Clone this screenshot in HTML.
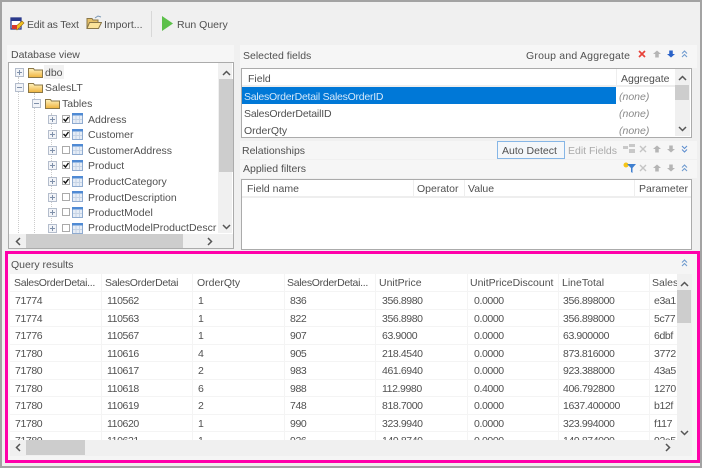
<!DOCTYPE html>
<html><head><meta charset="utf-8">
<style>
html,body{margin:0;padding:0}
body{width:702px;height:468px;overflow:hidden;position:relative;background:#f0f0f0;font-family:"Liberation Sans",sans-serif;font-size:10.5px;color:#333;filter:blur(.35px)}
div,span,svg{position:absolute}
span{white-space:nowrap;line-height:14px;height:14px;margin-top:1px}
.b{background:#fff}
.g{color:#505050}
#q span{letter-spacing:-.4px}
#q span.h{letter-spacing:0}
#q span.s{letter-spacing:-.3px}
</style></head><body>
<svg width="0" height="0" style="left:0;top:0">
<defs>
<linearGradient id="fg" x1="0" y1="0" x2="0" y2="1"><stop offset="0" stop-color="#fff3c0"/><stop offset="1" stop-color="#eeb33c"/></linearGradient>
<symbol id="folder" viewBox="0 0 15 11"><path d="M.5 10.500V1.500h5l1 1.500h8v7.500z" fill="url(#fg)" stroke="#8a7748"/></symbol>
<symbol id="plus" viewBox="0 0 9 9"><rect x=".5" y=".5" width="8" height="8" fill="#f2f4f8" stroke="#b4bdcc"/><path d="M2 4.500h5M4.500 2v5" stroke="#7f90aa"/></symbol>
<symbol id="minus" viewBox="0 0 9 9"><rect x=".5" y=".5" width="8" height="8" fill="#f2f4f8" stroke="#b4bdcc"/><path d="M2 4.500h5" stroke="#7f90aa"/></symbol>
<symbol id="tbl" viewBox="0 0 11 11"><rect x=".5" y=".5" width="10" height="10" fill="#e6edf6" stroke="#8fabd0"/><rect x="0" y="0" width="11" height="2.500" fill="#4f8ad4"/><path d="M4 3v7M7.500 3v7M1 6.500h9" stroke="#c6d4e6"/></symbol>
<symbol id="on" viewBox="0 0 8 8"><rect x=".5" y=".5" width="7" height="7" fill="#fff" stroke="#aaa"/><path d="M1.500 4l2 2 3-4" fill="none" stroke="#111" stroke-width="1.400"/></symbol>
<symbol id="off" viewBox="0 0 8 8"><rect x=".5" y=".5" width="7" height="7" fill="#fff" stroke="#aaa"/></symbol>
<symbol id="ua" viewBox="0 0 9 6"><path d="M1 5l3.500-3.500L8 5" fill="none" stroke="#555" stroke-width="1.500"/></symbol>
<symbol id="da" viewBox="0 0 9 6"><path d="M1 1l3.500 3.500L8 1" fill="none" stroke="#555" stroke-width="1.500"/></symbol>
<symbol id="la" viewBox="0 0 6 9"><path d="M5 1L1.500 4.500 5 8" fill="none" stroke="#555" stroke-width="1.500"/></symbol>
<symbol id="ra" viewBox="0 0 6 9"><path d="M1 1l3.500 3.500L1 8" fill="none" stroke="#555" stroke-width="1.500"/></symbol>
<symbol id="cu" viewBox="0 0 7 8"><path d="M1 3.500l2.500-2.500L6 3.500M1 7l2.500-2.500L6 7" fill="none" stroke="#6f9bcf" stroke-width="1.100"/></symbol>
<symbol id="cd" viewBox="0 0 7 8"><path d="M1 1l2.500 2.500L6 1M1 4.500L3.500 7 6 4.500" fill="none" stroke="#5f8fcf" stroke-width="1.100"/></symbol>
<symbol id="up" viewBox="0 0 9 8"><path d="M4.500 0L9 4H6.500v4h-4V4H0z" fill="#b5b5b5"/></symbol>
<symbol id="dn" viewBox="0 0 9 8"><path d="M4.500 8L9 4H6.500V0h-4v4H0z" fill="#b5b5b5"/></symbol>
<symbol id="dnb" viewBox="0 0 9 8"><path d="M4.500 8L9 4H6.500V0h-4v4H0z" fill="#2a62c8"/></symbol>
<symbol id="x" viewBox="0 0 8 8"><path d="M1 1l6 6M7 1L1 7" stroke="#c4c4c4" stroke-width="1.400"/></symbol>
</defs></svg>

<!-- outer frame -->
<div style="left:0;top:0;width:702px;height:2px;background:#a3a3a3"></div>
<div style="left:0;top:0;width:2px;height:468px;background:#a3a3a3"></div>
<div style="left:700px;top:0;width:2px;height:468px;background:#a3a3a3"></div>
<div style="left:0;top:466px;width:702px;height:2px;background:#a3a3a3"></div>

<!-- toolbar -->
<svg style="left:10px;top:16px" width="15" height="16" viewBox="0 0 15 16"><rect x="1" y="2" width="10" height="11" fill="#fff" stroke="#2b3a8c" stroke-width="1.300"/><path d="M1 2h10v3H1z" fill="#2b3a8c"/><path d="M4 12l8-7 2 2-7 7z" fill="#f0c020" stroke="#9a6a10" stroke-width=".6"/><path d="M2 9h5v4H2z" fill="#d8392c"/></svg>
<span style="left:27px;top:17px;letter-spacing:-.2px" class="g">Edit as Text</span>
<svg style="left:86px;top:15px" width="16" height="15" viewBox="0 0 16 15"><path d="M1 13.500V3.500h5l1 1.500h5v8.500z" fill="#e5c068" stroke="#8a7748"/><path d="M1 13.500l2.500-6h12l-3 6z" fill="#fbe39a" stroke="#8a7748"/><path d="M9 3l3-2 3 1" fill="none" stroke="#7a97b5"/></svg>
<span style="left:104px;top:17px" class="g">Import...</span>
<div style="left:151px;top:11px;width:1px;height:26px;background:#d8d8d8"></div>
<svg style="left:162px;top:16px" width="11" height="15" viewBox="0 0 11 15"><path d="M0 0l11 7.500L0 15z" fill="#5cc04a"/></svg>
<span style="left:177px;top:17px" class="g">Run Query</span>

<!-- database view -->
<div style="left:7px;top:45px;width:227px;height:17px;background:#f6f6f6"></div>
<span style="left:11px;top:47px" class="g">Database view</span>
<div style="left:8px;top:62px;width:224px;height:185px;background:#fff;border:1px solid #ababab;overflow:hidden">
  <div style="left:9px;top:14px;width:0;height:170px;border-left:1px dotted #ccc"></div>
  <div style="left:25px;top:30px;width:0;height:150px;border-left:1px dotted #ccc"></div>
  <div style="left:42px;top:50px;width:0;height:130px;border-left:1px dotted #ccc"></div>
</div>
<svg style="left:15px;top:68px" width="9" height="9"><use href="#plus"/></svg>
<svg style="left:15px;top:83px" width="9" height="9"><use href="#minus"/></svg>
<svg style="left:32px;top:99px" width="9" height="9"><use href="#minus"/></svg>
<svg style="left:28px;top:67px" width="15" height="11"><use href="#folder"/></svg>
<svg style="left:28px;top:82px" width="15" height="11"><use href="#folder"/></svg>
<svg style="left:45px;top:98px" width="15" height="11"><use href="#folder"/></svg>
<div style="left:44px;top:65px;width:20px;height:14px;background:#f2f2f2"></div>
<span style="left:45px;top:65px" class="g">dbo</span>
<span style="left:45px;top:80px" class="g">SalesLT</span>
<span style="left:62px;top:96px" class="g">Tables</span>

<svg style="left:48px;top:115px" width="9" height="9"><use href="#plus"/></svg><svg style="left:62px;top:115px" width="8" height="8"><use href="#on"/></svg><svg style="left:72px;top:113px" width="11" height="11"><use href="#tbl"/></svg><span style="left:88px;top:112px" class="g">Address</span>
<svg style="left:48px;top:130px" width="9" height="9"><use href="#plus"/></svg><svg style="left:62px;top:130px" width="8" height="8"><use href="#on"/></svg><svg style="left:72px;top:129px" width="11" height="11"><use href="#tbl"/></svg><span style="left:88px;top:127px" class="g">Customer</span>
<svg style="left:48px;top:146px" width="9" height="9"><use href="#plus"/></svg><svg style="left:62px;top:146px" width="8" height="8"><use href="#off"/></svg><svg style="left:72px;top:144px" width="11" height="11"><use href="#tbl"/></svg><span style="left:88px;top:143px" class="g">CustomerAddress</span>
<svg style="left:48px;top:161px" width="9" height="9"><use href="#plus"/></svg><svg style="left:62px;top:161px" width="8" height="8"><use href="#on"/></svg><svg style="left:72px;top:160px" width="11" height="11"><use href="#tbl"/></svg><span style="left:88px;top:158px" class="g">Product</span>
<svg style="left:48px;top:177px" width="9" height="9"><use href="#plus"/></svg><svg style="left:62px;top:177px" width="8" height="8"><use href="#on"/></svg><svg style="left:72px;top:176px" width="11" height="11"><use href="#tbl"/></svg><span style="left:88px;top:174px" class="g">ProductCategory</span>
<svg style="left:48px;top:193px" width="9" height="9"><use href="#plus"/></svg><svg style="left:62px;top:193px" width="8" height="8"><use href="#off"/></svg><svg style="left:72px;top:191px" width="11" height="11"><use href="#tbl"/></svg><span style="left:88px;top:190px" class="g">ProductDescription</span>
<svg style="left:48px;top:208px" width="9" height="9"><use href="#plus"/></svg><svg style="left:62px;top:208px" width="8" height="8"><use href="#off"/></svg><svg style="left:72px;top:207px" width="11" height="11"><use href="#tbl"/></svg><span style="left:88px;top:205px" class="g">ProductModel</span>
<svg style="left:48px;top:224px" width="9" height="9"><use href="#plus"/></svg><svg style="left:62px;top:224px" width="8" height="8"><use href="#off"/></svg><svg style="left:72px;top:223px" width="11" height="11"><use href="#tbl"/></svg><div style="left:88px;top:220px;width:129px;height:15px;overflow:hidden"><span style="left:0;top:0" class="g">ProductModelProductDescription</span></div>

<div style="left:218px;top:63px;width:14px;height:170px;background:#f0f0f0"></div>
<div style="left:219px;top:79px;width:14px;height:93px;background:#cdcdcd"></div>
<svg style="left:222px;top:70px" width="9" height="6"><use href="#ua"/></svg>
<svg style="left:222px;top:224px" width="9" height="6"><use href="#da"/></svg>
<div style="left:9px;top:234px;width:224px;height:14px;background:#f0f0f0"></div>
<div style="left:26px;top:234px;width:157px;height:14px;background:#cdcdcd"></div>
<svg style="left:15px;top:237px" width="6" height="9"><use href="#la"/></svg>
<svg style="left:207px;top:237px" width="6" height="9"><use href="#ra"/></svg>

<!-- selected fields -->
<div style="left:240px;top:45px;width:457px;height:23px;background:#f6f6f6"></div>
<span style="left:243px;top:48px" class="g">Selected fields</span>
<span style="left:526px;top:48px;letter-spacing:.2px" class="g">Group and Aggregate</span>
<svg style="left:638px;top:50px" width="8" height="8" viewBox="0 0 8 8"><path d="M1 1l6 6M7 1L1 7" stroke="#e8423a" stroke-width="1.700"/></svg>
<svg style="left:653px;top:50px" width="8" height="8"><use href="#up"/></svg>
<svg style="left:667px;top:50px" width="8" height="8"><use href="#dnb"/></svg>
<svg style="left:681px;top:50px" width="7" height="8"><use href="#cu"/></svg>
<div style="left:241px;top:68px;width:449px;height:68px;background:#fff;border:1px solid #ababab"></div>
<div style="left:242px;top:85px;width:433px;height:2px;background:#eee"></div>
<div style="left:616px;top:69px;width:1px;height:17px;background:#eee"></div>
<span style="left:248px;top:71px" class="g">Field</span>
<span style="left:621px;top:71px" class="g">Aggregate</span>
<div style="left:242px;top:87px;width:374px;height:17px;background:#0078d7"></div>
<span style="left:244px;top:89px;color:#d4e8fa;letter-spacing:-.25px">SalesOrderDetail SalesOrderID</span>
<span style="left:244px;top:106px;letter-spacing:-.17px" class="g">SalesOrderDetailID</span>
<span style="left:244px;top:123px" class="g">OrderQty</span>
<span style="left:619px;top:89px;color:#888;font-style:italic">(none)</span>
<span style="left:619px;top:106px;color:#888;font-style:italic">(none)</span>
<span style="left:619px;top:123px;color:#888;font-style:italic">(none)</span>
<div style="left:675px;top:69px;width:15px;height:67px;background:#f0f0f0"></div>
<div style="left:675px;top:85px;width:14px;height:15px;background:#cdcdcd"></div>
<svg style="left:678px;top:75px" width="9" height="6"><use href="#ua"/></svg>
<svg style="left:678px;top:126px" width="9" height="6"><use href="#da"/></svg>

<!-- relationships -->
<div style="left:240px;top:141px;width:457px;height:18px;background:#f6f6f6"></div>
<span style="left:242px;top:143px" class="g">Relationships</span>
<div style="left:497px;top:141px;width:66px;height:16px;border:1px solid #86b6e6;background:#f4f7fa"></div>
<span style="left:502px;top:143px" class="g">Auto Detect</span>
<span style="left:568px;top:143px;color:#aaa">Edit Fields</span>
<svg style="left:623px;top:144px" width="12" height="10" viewBox="0 0 12 10"><path d="M0 2h5v3H0zM6 0h6v3H6zM6 5h6v4H6z" fill="#c8c8c8"/></svg>
<svg style="left:639px;top:145px" width="8" height="8"><use href="#x"/></svg>
<svg style="left:653px;top:145px" width="8" height="8"><use href="#up"/></svg>
<svg style="left:667px;top:145px" width="8" height="8"><use href="#dn"/></svg>
<svg style="left:681px;top:145px" width="7" height="8"><use href="#cd"/></svg>

<!-- applied filters -->
<div style="left:240px;top:160px;width:457px;height:18px;background:#f6f6f6"></div>
<span style="left:243px;top:161px" class="g">Applied filters</span>
<svg style="left:623px;top:162px" width="13" height="11" viewBox="0 0 13 11"><circle cx="3" cy="3" r="2.500" fill="#f5c518"/><path d="M4 2h9L9.500 6v5L8 10V6z" fill="#3f7fd0"/></svg>
<svg style="left:639px;top:164px" width="8" height="8"><use href="#x"/></svg>
<svg style="left:653px;top:164px" width="8" height="8"><use href="#up"/></svg>
<svg style="left:667px;top:164px" width="8" height="8"><use href="#dn"/></svg>
<svg style="left:681px;top:164px" width="7" height="8"><use href="#cu"/></svg>
<div style="left:241px;top:179px;width:449px;height:69px;background:#fff;border:1px solid #ababab"></div>
<div style="left:242px;top:196px;width:449px;height:2px;background:#eee"></div>
<div style="left:413px;top:180px;width:1px;height:17px;background:#eee"></div>
<div style="left:464px;top:180px;width:1px;height:17px;background:#eee"></div>
<div style="left:634px;top:180px;width:1px;height:17px;background:#eee"></div>
<span style="left:247px;top:181px" class="g">Field name</span>
<span style="left:417px;top:181px" class="g">Operator</span>
<span style="left:468px;top:181px" class="g">Value</span>
<span style="left:639px;top:181px" class="g">Parameter</span>

<!-- query results -->
<div style="left:5px;top:251px;width:689px;height:206px;border:3px solid #ff00aa;background:#f5f5f5"></div>
<span style="left:11px;top:257px" class="g">Query results</span>
<svg style="left:681px;top:259px" width="7" height="8"><use href="#cu"/></svg>

<div id="q" style="left:10px;top:274px;width:667px;height:166px;background:#fff;overflow:hidden">
  <div style="left:91px;top:0;width:1px;height:166px;background:#f4f4f4"></div>
  <div style="left:182px;top:0;width:1px;height:166px;background:#f4f4f4"></div>
  <div style="left:274px;top:0;width:1px;height:166px;background:#f4f4f4"></div>
  <div style="left:365px;top:0;width:1px;height:166px;background:#f4f4f4"></div>
  <div style="left:457px;top:0;width:1px;height:166px;background:#f4f4f4"></div>
  <div style="left:548px;top:0;width:1px;height:166px;background:#f4f4f4"></div>
  <div style="left:639px;top:0;width:1px;height:166px;background:#f4f4f4"></div>
  <div style="left:0;top:17px;width:667px;height:1px;background:#f4f4f4"></div>
  <div style="left:0;top:35px;width:667px;height:1px;background:#f4f4f4"></div>
  <div style="left:0;top:52px;width:667px;height:1px;background:#f4f4f4"></div>
  <div style="left:0;top:70px;width:667px;height:1px;background:#f4f4f4"></div>
  <div style="left:0;top:87px;width:667px;height:1px;background:#f4f4f4"></div>
  <div style="left:0;top:105px;width:667px;height:1px;background:#f4f4f4"></div>
  <div style="left:0;top:122px;width:667px;height:1px;background:#f4f4f4"></div>
  <div style="left:0;top:140px;width:667px;height:1px;background:#f4f4f4"></div>
  <div style="left:0;top:157px;width:667px;height:1px;background:#f4f4f4"></div>

  <span style="left:4px;top:1px" class="g s">SalesOrderDetai...</span><span style="left:95px;top:1px" class="g s">SalesOrderDetai</span><span style="left:187px;top:1px" class="g h">OrderQty</span><span style="left:277px;top:1px" class="g s">SalesOrderDetai...</span><span style="left:369px;top:1px" class="g h">UnitPrice</span><span style="left:460px;top:1px" class="g h">UnitPriceDiscount</span><span style="left:552px;top:1px" class="g h">LineTotal</span><span style="left:642px;top:1px" class="g h">Sales</span>

  <span style="left:5px;top:19px" class="g">71774</span><span style="left:97px;top:19px" class="g">110562</span><span style="left:188px;top:19px" class="g">1</span><span style="left:280px;top:19px" class="g">836</span><span style="left:372px;top:19px" class="g">356.8980</span><span style="left:464px;top:19px" class="g">0.0000</span><span style="left:553px;top:19px" class="g">356.898000</span><span style="left:644px;top:19px" class="g">e3a1</span>
  <span style="left:5px;top:37px" class="g">71774</span><span style="left:97px;top:37px" class="g">110563</span><span style="left:188px;top:37px" class="g">1</span><span style="left:280px;top:37px" class="g">822</span><span style="left:372px;top:37px" class="g">356.8980</span><span style="left:464px;top:37px" class="g">0.0000</span><span style="left:553px;top:37px" class="g">356.898000</span><span style="left:644px;top:37px" class="g">5c77</span>
  <span style="left:5px;top:54px" class="g">71776</span><span style="left:97px;top:54px" class="g">110567</span><span style="left:188px;top:54px" class="g">1</span><span style="left:280px;top:54px" class="g">907</span><span style="left:372px;top:54px" class="g">63.9000</span><span style="left:464px;top:54px" class="g">0.0000</span><span style="left:553px;top:54px" class="g">63.900000</span><span style="left:644px;top:54px" class="g">6dbf</span>
  <span style="left:5px;top:72px" class="g">71780</span><span style="left:97px;top:72px" class="g">110616</span><span style="left:188px;top:72px" class="g">4</span><span style="left:280px;top:72px" class="g">905</span><span style="left:372px;top:72px" class="g">218.4540</span><span style="left:464px;top:72px" class="g">0.0000</span><span style="left:553px;top:72px" class="g">873.816000</span><span style="left:644px;top:72px" class="g">3772</span>
  <span style="left:5px;top:89px" class="g">71780</span><span style="left:97px;top:89px" class="g">110617</span><span style="left:188px;top:89px" class="g">2</span><span style="left:280px;top:89px" class="g">983</span><span style="left:372px;top:89px" class="g">461.6940</span><span style="left:464px;top:89px" class="g">0.0000</span><span style="left:553px;top:89px" class="g">923.388000</span><span style="left:644px;top:89px" class="g">43a5</span>
  <span style="left:5px;top:107px" class="g">71780</span><span style="left:97px;top:107px" class="g">110618</span><span style="left:188px;top:107px" class="g">6</span><span style="left:280px;top:107px" class="g">988</span><span style="left:372px;top:107px" class="g">112.9980</span><span style="left:464px;top:107px" class="g">0.4000</span><span style="left:553px;top:107px" class="g">406.792800</span><span style="left:644px;top:107px" class="g">1270</span>
  <span style="left:5px;top:124px" class="g">71780</span><span style="left:97px;top:124px" class="g">110619</span><span style="left:188px;top:124px" class="g">2</span><span style="left:280px;top:124px" class="g">748</span><span style="left:372px;top:124px" class="g">818.7000</span><span style="left:464px;top:124px" class="g">0.0000</span><span style="left:553px;top:124px" class="g">1637.400000</span><span style="left:644px;top:124px" class="g">b12f</span>
  <span style="left:5px;top:142px" class="g">71780</span><span style="left:97px;top:142px" class="g">110620</span><span style="left:188px;top:142px" class="g">1</span><span style="left:280px;top:142px" class="g">990</span><span style="left:372px;top:142px" class="g">323.9940</span><span style="left:464px;top:142px" class="g">0.0000</span><span style="left:553px;top:142px" class="g">323.994000</span><span style="left:644px;top:142px" class="g">f117</span>
  <span style="left:5px;top:159px" class="g">71780</span><span style="left:97px;top:159px" class="g">110621</span><span style="left:188px;top:159px" class="g">1</span><span style="left:280px;top:159px" class="g">926</span><span style="left:372px;top:159px" class="g">149.8740</span><span style="left:464px;top:159px" class="g">0.0000</span><span style="left:553px;top:159px" class="g">149.874000</span><span style="left:644px;top:159px" class="g">92a5</span>
</div>

<div style="left:677px;top:274px;width:15px;height:166px;background:#f0f0f0"></div>
<div style="left:677px;top:290px;width:14px;height:33px;background:#cdcdcd"></div>
<svg style="left:680px;top:281px" width="9" height="6"><use href="#ua"/></svg>
<svg style="left:680px;top:430px" width="9" height="6"><use href="#da"/></svg>
<div style="left:10px;top:440px;width:682px;height:16px;background:#f0f0f0"></div>
<div style="left:26px;top:440px;width:59px;height:15px;background:#cdcdcd"></div>
<svg style="left:15px;top:443px" width="6" height="9"><use href="#la"/></svg>
<svg style="left:665px;top:443px" width="6" height="9"><use href="#ra"/></svg>
</body></html>
